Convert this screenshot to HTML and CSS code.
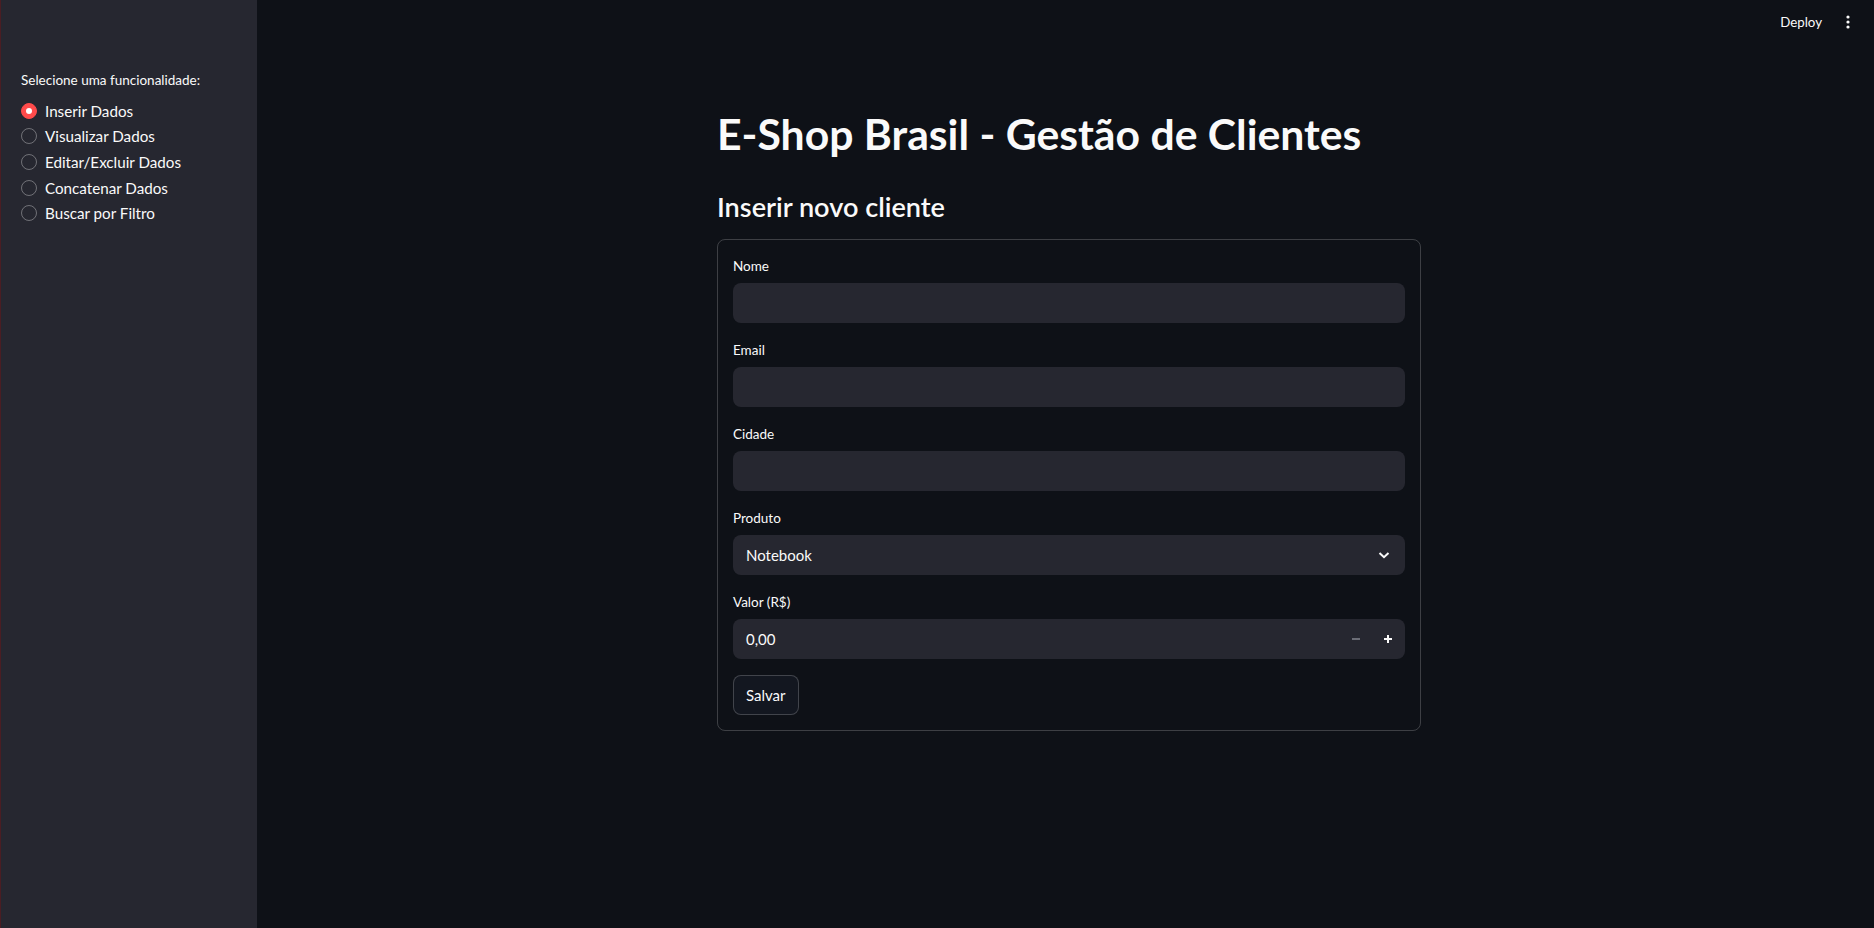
FILE: index.html
```html
<!DOCTYPE html>
<html lang="pt-BR">
<head>
<meta charset="utf-8">
<title>E-Shop Brasil - Gestão de Clientes</title>
<link rel="stylesheet" href="styles.css">
</head>
<body>
<div class="app">
  <aside class="sidebar">
    <div class="sidebar-content">
      <div class="radio-title">Selecione uma funcionalidade:</div>
      <div class="radio-group">
        <div class="radio-opt selected"><span class="radio-circle"></span><span class="radio-text">Inserir Dados</span></div>
        <div class="radio-opt"><span class="radio-circle"></span><span class="radio-text">Visualizar Dados</span></div>
        <div class="radio-opt"><span class="radio-circle"></span><span class="radio-text">Editar/Excluir Dados</span></div>
        <div class="radio-opt"><span class="radio-circle"></span><span class="radio-text">Concatenar Dados</span></div>
        <div class="radio-opt"><span class="radio-circle"></span><span class="radio-text">Buscar por Filtro</span></div>
      </div>
    </div>
  </aside>
  <main class="main">
    <header class="topbar">
      <span class="deploy">Deploy</span>
      <svg class="kebab" width="4" height="14" viewBox="0 0 4 14"><circle cx="2" cy="2" r="1.6" fill="#fafafa"/><circle cx="2" cy="7" r="1.6" fill="#fafafa"/><circle cx="2" cy="12" r="1.6" fill="#fafafa"/></svg>
    </header>
    <div class="block">
      <h1 class="title">E-Shop Brasil - Gestão de Clientes</h1>
      <h3 class="subtitle">Inserir novo cliente</h3>
      <div class="form">
        <div class="field">
          <div class="field-label">Nome</div>
          <div class="input"></div>
        </div>
        <div class="field">
          <div class="field-label">Email</div>
          <div class="input"></div>
        </div>
        <div class="field">
          <div class="field-label">Cidade</div>
          <div class="input"></div>
        </div>
        <div class="field">
          <div class="field-label">Produto</div>
          <div class="input select">
            <span class="input-value">Notebook</span>
            <svg class="chevron" width="16" height="16" viewBox="0 0 16 16"><path d="M3.5 6 L8 10.2 L12.5 6" fill="none" stroke="#fafafa" stroke-width="2"/></svg>
          </div>
        </div>
        <div class="field">
          <div class="field-label">Valor (R$)</div>
          <div class="input number">
            <span class="input-value">0,00</span>
            <span class="step minus"><svg width="10" height="10" viewBox="0 0 10 10"><path d="M1 5 H9" stroke="#6b6d76" stroke-width="2"/></svg></span>
            <span class="step plus"><svg width="10" height="10" viewBox="0 0 10 10"><path d="M1 5 H9 M5 1 V9" stroke="#fafafa" stroke-width="2"/></svg></span>
          </div>
        </div>
        <button class="btn" type="button">Salvar</button>
      </div>
    </div>
  </main>
</div>
</body>
</html>
```

FILE: styles.css
```css
* { box-sizing: border-box; }
html, body { margin: 0; padding: 0; }
body {
  background: #0e1117;
  color: #fafafa;
  font-family: Lato, "Noto Sans", sans-serif;
  width: 1874px;
  height: 928px;
  overflow: hidden;
}
.app {
  display: flex;
  height: 928px;
}
.sidebar {
  width: 257px;
  flex: none;
  background: #262730;
  border-left: 1px solid #4a1d23;
}
.sidebar-content {
  padding: 70px 0 0 20px;
}
.radio-title {
  font-size: 13.5px;
  line-height: 20px;
  margin-bottom: 8px;
}
.radio-opt {
  display: flex;
  align-items: center;
  height: 25.6px;
  font-size: 15.2px;
}
.radio-circle {
  width: 16px;
  height: 16px;
  border-radius: 50%;
  border: 1px solid rgba(250, 250, 250, 0.35);
  margin-right: 8px;
  flex: none;
  display: flex;
  align-items: center;
  justify-content: center;
}
.radio-opt.selected .radio-circle {
  background: #ff4b4b;
  border-color: #ff4b4b;
}
.radio-opt.selected .radio-circle::after {
  content: "";
  width: 6px;
  height: 6px;
  border-radius: 50%;
  background: #ffffff;
}
.main {
  flex: 1;
  display: flex;
  flex-direction: column;
  padding-left: 7px;
}
.topbar {
  height: 44px;
  display: flex;
  align-items: center;
  justify-content: flex-end;
  padding-right: 24px;
}
.deploy {
  font-size: 13.3px;
}
.kebab {
  margin-left: 24px;
}
.block {
  width: 704px;
  margin: 0 auto;
  padding-top: 64px;
}
.title {
  margin: 0;
  font-size: 42.7px;
  font-weight: 700;
  line-height: 52.8px;
}
.subtitle {
  margin: 29px 0 0 0;
  font-size: 27.1px;
  font-weight: 600;
  line-height: 33.6px;
}
.form {
  margin-top: 16px;
  border: 1px solid rgba(250, 250, 250, 0.2);
  border-radius: 8px;
  padding: 16px 15px 15px 15px;
  display: flex;
  flex-direction: column;
  gap: 17px;
}
.field-label {
  font-size: 13.5px;
  line-height: 20px;
  margin-bottom: 7px;
}
.input {
  height: 40px;
  background: #262730;
  border-radius: 8px;
  display: flex;
  align-items: center;
  padding-left: 13px;
  font-size: 15px;
}
.input-value {
  flex: 1;
}
.chevron {
  margin-right: 13px;
}
.number {
  padding-right: 1px;
}
.step {
  width: 32px;
  height: 38px;
  display: flex;
  align-items: center;
  justify-content: center;
}
.btn {
  align-self: flex-start;
  margin-top: -1px;
  height: 40px;
  padding: 0 12px;
  background: #131720;
  color: #fafafa;
  border: 1px solid rgba(250, 250, 250, 0.2);
  border-radius: 8px;
  font-family: Lato, "Noto Sans", sans-serif;
  font-size: 15px;
}
```
